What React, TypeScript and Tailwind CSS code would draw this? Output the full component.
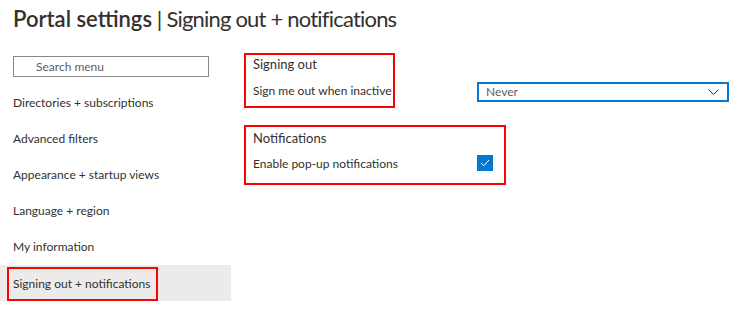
import React from "react";

const items = [
  "Directories + subscriptions",
  "Advanced filters",
  "Appearance + startup views",
  "Language + region",
  "My information",
];

export default function App() {
  return (
    <div
      className="w-[740px] h-[313px] bg-white text-[#323130] overflow-hidden"
      style={{ fontFamily: 'Lato, "Open Sans", sans-serif' }}
    >
      <div className="h-[48px] pl-[13px] pt-[5px]">
        <h1 className="text-[22px] leading-[28px] whitespace-nowrap">
          <span className="font-semibold">Portal settings</span>
          <span className="font-normal text-[#323130] tracking-[-0.8px]"> | Signing out + notifications</span>
        </h1>
      </div>
      <div className="flex">
        <div className="w-[231px] shrink-0 pt-[8px]">
          <div className="ml-[13px] w-[196px] h-[21px] border border-[#8a8886] flex items-center pl-[22px] text-[12px] text-[#605e5c]">
            Search menu
          </div>
          <div className="mt-[8px]">
            {items.map((t) => (
              <div key={t} className="h-[36px] flex items-center pl-[13px] text-[12px]">
                {t}
              </div>
            ))}
            <div className="h-[36px] flex items-center pl-[7px] bg-[#edebe9] text-[12px]">
              <span className="border-2 border-[#ff0000] h-[34px] mt-[2px] flex items-center px-[4px] w-[151px]">
                Signing out + notifications
              </span>
            </div>
          </div>
        </div>
        <div className="ml-[13px] pt-[5px]">
          <div className="flex items-end">
            <div className="w-[151px] h-[55px] border-2 border-[#ff0000] pl-[7px]">
              <div className="text-[13px] leading-[18px]">Signing out</div>
              <div className="mt-[9px] text-[12px] leading-[18px] whitespace-nowrap">Sign me out when inactive</div>
            </div>
            <div className="ml-[82px] mb-[6px] w-[252px] h-[20px] border-2 border-[#0078d4] flex items-center justify-between pl-[7px] pr-[8px] text-[12px] text-[#605e5c]">
              <span>Never</span>
              <svg width="11" height="6" viewBox="0 0 11 6" fill="none">
                <polyline points="0.5,0.5 5.5,5.5 10.5,0.5" stroke="#323130" strokeWidth="1" />
              </svg>
            </div>
          </div>
          <div className="mt-[17px] w-[262px] h-[60px] border-2 border-[#ff0000] pl-[7px] pr-[11px] pt-[2px]">
            <div className="text-[13px] leading-[18px]">Notifications</div>
            <div className="mt-[5px] flex items-center justify-between">
              <span className="text-[12px] leading-[18px] mt-[3px]">Enable pop-up notifications</span>
              <div className="w-[16px] h-[16px] bg-[#0078d4] flex items-center justify-center">
                <svg width="10" height="8" viewBox="0 0 10 8" fill="none">
                  <polyline points="1,4 3.8,6.8 9,1" stroke="white" strokeWidth="1" />
                </svg>
              </div>
            </div>
          </div>
        </div>
      </div>
    </div>
  );
}
